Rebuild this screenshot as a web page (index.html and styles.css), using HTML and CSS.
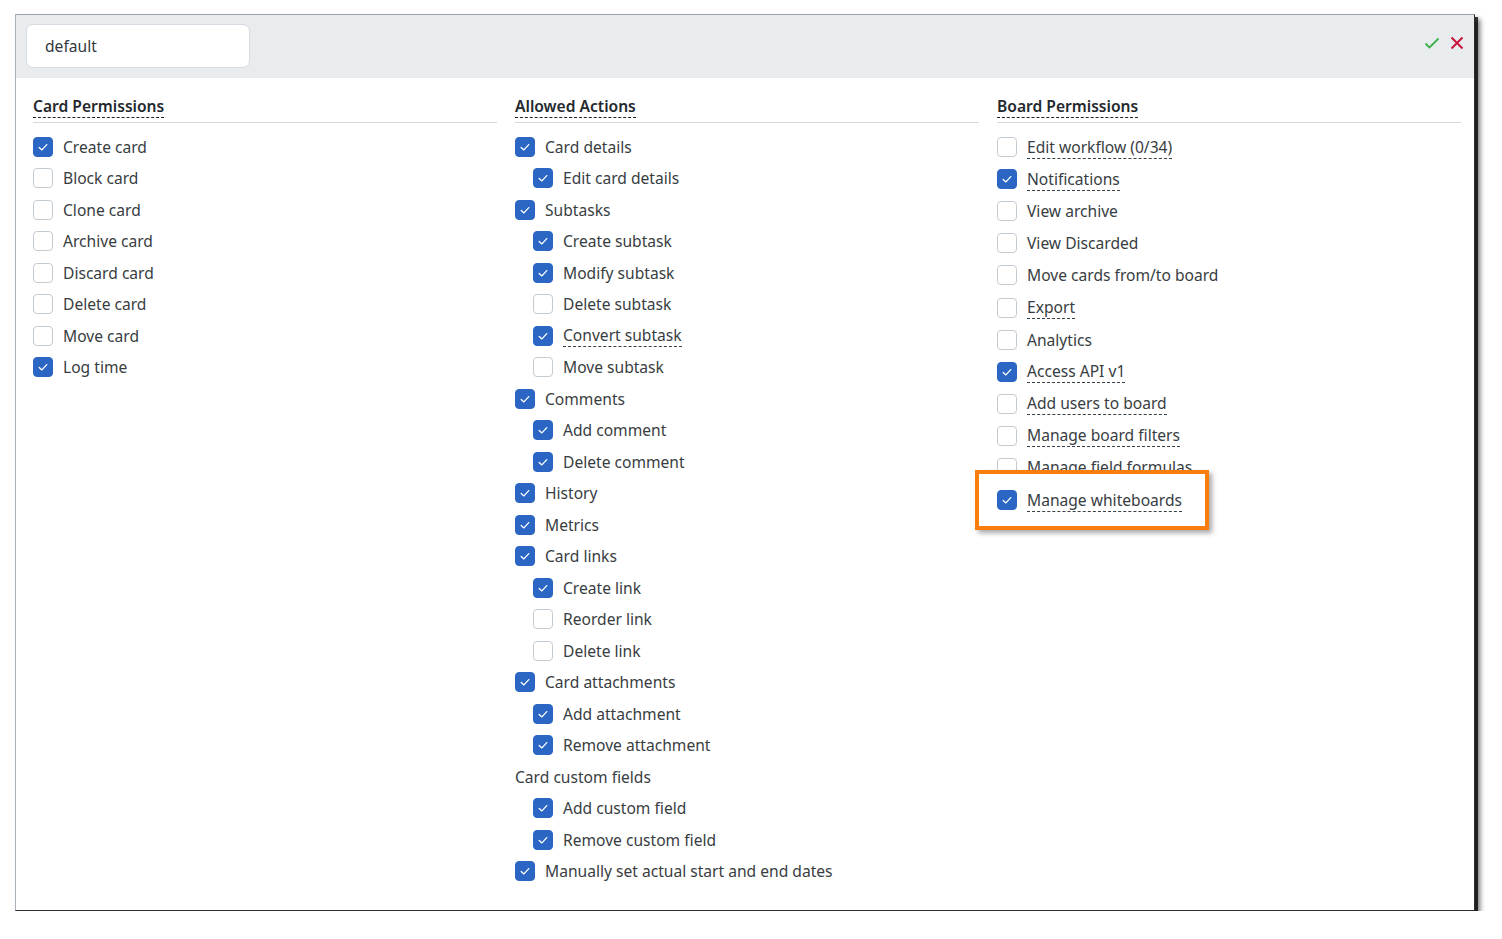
FILE: index.html
```html
<!DOCTYPE html>
<html lang="en">
<head>
<meta charset="utf-8">
<title>Role permissions</title>
<link rel="stylesheet" href="styles.css">
</head>
<body>
<div class="frame">
  <div class="header">
    <div class="name-input">default</div>
    <div class="actions">
      <svg class="icon-ok" width="16" height="12" viewBox="0 0 16 12"><path d="M1.5 6.5 L5.5 10.5 L14.5 1.5" fill="none" stroke="#3db048" stroke-width="1.8"/></svg>
      <svg class="icon-cancel" width="14" height="14" viewBox="0 0 14 14"><path d="M1.5 1.5 L12.5 12.5 M12.5 1.5 L1.5 12.5" fill="none" stroke="#c8163a" stroke-width="2"/></svg>
    </div>
  </div>
  <div class="content">
    <section class="col">
      <h3 class="col-title"><span>Card Permissions</span></h3>
      <ul class="list">
        <li class="item"><span class="cb on"><svg viewBox="0 0 20 20"><path d="M6.2 10.4 L8.9 12.9 L13.8 7.6"/></svg></span><span class="label">Create card</span></li>
        <li class="item"><span class="cb"></span><span class="label">Block card</span></li>
        <li class="item"><span class="cb"></span><span class="label">Clone card</span></li>
        <li class="item"><span class="cb"></span><span class="label">Archive card</span></li>
        <li class="item"><span class="cb"></span><span class="label">Discard card</span></li>
        <li class="item"><span class="cb"></span><span class="label">Delete card</span></li>
        <li class="item"><span class="cb"></span><span class="label">Move card</span></li>
        <li class="item"><span class="cb on"><svg viewBox="0 0 20 20"><path d="M6.2 10.4 L8.9 12.9 L13.8 7.6"/></svg></span><span class="label">Log time</span></li>
      </ul>
    </section>
    <section class="col">
      <h3 class="col-title"><span>Allowed Actions</span></h3>
      <ul class="list">
        <li class="item"><span class="cb on"><svg viewBox="0 0 20 20"><path d="M6.2 10.4 L8.9 12.9 L13.8 7.6"/></svg></span><span class="label">Card details</span></li>
        <li class="item sub"><span class="cb on"><svg viewBox="0 0 20 20"><path d="M6.2 10.4 L8.9 12.9 L13.8 7.6"/></svg></span><span class="label">Edit card details</span></li>
        <li class="item"><span class="cb on"><svg viewBox="0 0 20 20"><path d="M6.2 10.4 L8.9 12.9 L13.8 7.6"/></svg></span><span class="label">Subtasks</span></li>
        <li class="item sub"><span class="cb on"><svg viewBox="0 0 20 20"><path d="M6.2 10.4 L8.9 12.9 L13.8 7.6"/></svg></span><span class="label">Create subtask</span></li>
        <li class="item sub"><span class="cb on"><svg viewBox="0 0 20 20"><path d="M6.2 10.4 L8.9 12.9 L13.8 7.6"/></svg></span><span class="label">Modify subtask</span></li>
        <li class="item sub"><span class="cb"></span><span class="label">Delete subtask</span></li>
        <li class="item sub"><span class="cb on"><svg viewBox="0 0 20 20"><path d="M6.2 10.4 L8.9 12.9 L13.8 7.6"/></svg></span><span class="label dashed">Convert subtask</span></li>
        <li class="item sub"><span class="cb"></span><span class="label">Move subtask</span></li>
        <li class="item"><span class="cb on"><svg viewBox="0 0 20 20"><path d="M6.2 10.4 L8.9 12.9 L13.8 7.6"/></svg></span><span class="label">Comments</span></li>
        <li class="item sub"><span class="cb on"><svg viewBox="0 0 20 20"><path d="M6.2 10.4 L8.9 12.9 L13.8 7.6"/></svg></span><span class="label">Add comment</span></li>
        <li class="item sub"><span class="cb on"><svg viewBox="0 0 20 20"><path d="M6.2 10.4 L8.9 12.9 L13.8 7.6"/></svg></span><span class="label">Delete comment</span></li>
        <li class="item"><span class="cb on"><svg viewBox="0 0 20 20"><path d="M6.2 10.4 L8.9 12.9 L13.8 7.6"/></svg></span><span class="label">History</span></li>
        <li class="item"><span class="cb on"><svg viewBox="0 0 20 20"><path d="M6.2 10.4 L8.9 12.9 L13.8 7.6"/></svg></span><span class="label">Metrics</span></li>
        <li class="item"><span class="cb on"><svg viewBox="0 0 20 20"><path d="M6.2 10.4 L8.9 12.9 L13.8 7.6"/></svg></span><span class="label">Card links</span></li>
        <li class="item sub"><span class="cb on"><svg viewBox="0 0 20 20"><path d="M6.2 10.4 L8.9 12.9 L13.8 7.6"/></svg></span><span class="label">Create link</span></li>
        <li class="item sub"><span class="cb"></span><span class="label">Reorder link</span></li>
        <li class="item sub"><span class="cb"></span><span class="label">Delete link</span></li>
        <li class="item"><span class="cb on"><svg viewBox="0 0 20 20"><path d="M6.2 10.4 L8.9 12.9 L13.8 7.6"/></svg></span><span class="label">Card attachments</span></li>
        <li class="item sub"><span class="cb on"><svg viewBox="0 0 20 20"><path d="M6.2 10.4 L8.9 12.9 L13.8 7.6"/></svg></span><span class="label">Add attachment</span></li>
        <li class="item sub"><span class="cb on"><svg viewBox="0 0 20 20"><path d="M6.2 10.4 L8.9 12.9 L13.8 7.6"/></svg></span><span class="label">Remove attachment</span></li>
        <li class="item"><span class="label plain">Card custom fields</span></li>
        <li class="item sub"><span class="cb on"><svg viewBox="0 0 20 20"><path d="M6.2 10.4 L8.9 12.9 L13.8 7.6"/></svg></span><span class="label">Add custom field</span></li>
        <li class="item sub"><span class="cb on"><svg viewBox="0 0 20 20"><path d="M6.2 10.4 L8.9 12.9 L13.8 7.6"/></svg></span><span class="label">Remove custom field</span></li>
        <li class="item"><span class="cb on"><svg viewBox="0 0 20 20"><path d="M6.2 10.4 L8.9 12.9 L13.8 7.6"/></svg></span><span class="label">Manually set actual start and end dates</span></li>
      </ul>
    </section>
    <section class="col">
      <h3 class="col-title"><span>Board Permissions</span></h3>
      <ul class="list board">
        <li class="item"><span class="cb"></span><span class="label dashed">Edit workflow (0/34)</span></li>
        <li class="item"><span class="cb on"><svg viewBox="0 0 20 20"><path d="M6.2 10.4 L8.9 12.9 L13.8 7.6"/></svg></span><span class="label dashed">Notifications</span></li>
        <li class="item"><span class="cb"></span><span class="label">View archive</span></li>
        <li class="item"><span class="cb"></span><span class="label">View Discarded</span></li>
        <li class="item"><span class="cb"></span><span class="label">Move cards from/to board</span></li>
        <li class="item"><span class="cb"></span><span class="label dashed">Export</span></li>
        <li class="item"><span class="cb"></span><span class="label">Analytics</span></li>
        <li class="item"><span class="cb on"><svg viewBox="0 0 20 20"><path d="M6.2 10.4 L8.9 12.9 L13.8 7.6"/></svg></span><span class="label dashed">Access API v1</span></li>
        <li class="item"><span class="cb"></span><span class="label dashed">Add users to board</span></li>
        <li class="item"><span class="cb"></span><span class="label dashed">Manage board filters</span></li>
        <li class="item"><span class="cb"></span><span class="label dashed">Manage field formulas</span></li>
        <li class="item highlight"><span class="cb on"><svg viewBox="0 0 20 20"><path d="M6.2 10.4 L8.9 12.9 L13.8 7.6"/></svg></span><span class="label dashed">Manage whiteboards</span></li>
      </ul>
    </section>
  </div>
</div>
</body>
</html>
```

FILE: styles.css
```css
* { box-sizing: border-box; }

html, body {
  margin: 0;
  background: #ffffff;
}

body {
  padding: 14px 0 0 15px;
  font-family: "Noto Sans", "Open Sans", "Liberation Sans", sans-serif;
  font-size: 15.6px;
  color: #383d42;
}

.frame {
  width: 1460px;
  height: 897px;
  background: #ffffff;
  border-top: 1px solid #9ea4aa;
  border-left: 1px solid #a9b0b8;
  border-right: 1px solid #2d2d2d;
  border-bottom: 1px solid #2d2d2d;
  box-shadow: 3px 3px 0 rgba(0, 0, 0, 0.75), 5px 5px 5px rgba(0, 0, 0, 0.55);
  display: flex;
  flex-direction: column;
}

.header {
  height: 63px;
  background: #e9ecef;
  display: flex;
  align-items: flex-start;
  justify-content: space-between;
  padding: 9px 10px 0 10px;
}

.name-input {
  width: 224px;
  height: 44px;
  background: #ffffff;
  border: 1px solid #d5dbe0;
  border-radius: 7px;
  padding: 0 18px;
  display: flex;
  align-items: center;
  color: #33383d;
  font-size: 15.6px;
}

.actions {
  display: flex;
  align-items: center;
  gap: 10px;
  height: 36px;
  padding-top: 2px;
}

.actions svg { display: block; }

.content {
  flex: 1;
  display: grid;
  grid-template-columns: repeat(3, 1fr);
  column-gap: 18px;
  padding: 0 13px 0 17px;
  align-items: start;
}

.col-title {
  margin: 0;
  padding: 17px 0 5px 0;
  border-bottom: 1px solid #d3d9de;
  font-size: 15.6px;
  font-weight: 600;
  line-height: 22px;
  color: #24292e;
}

.col-title span {
  border-bottom: 1px dashed #222;
}

.list {
  list-style: none;
  margin: 0;
  padding: 8px 0 0 0;
  display: flex;
  flex-direction: column;
}

.item {
  height: 31.5px;
  display: flex;
  align-items: center;
  gap: 10px;
}

.board .item { height: 32.1px; }

.item.sub { margin-left: 18px; }

.cb {
  flex: none;
  width: 20px;
  height: 20px;
  border: 1px solid #c4ccd3;
  border-radius: 4px;
  background: #ffffff;
  display: flex;
}

.cb.on {
  background: #2b66c4;
  border-color: #2b66c4;
}

.cb svg {
  margin: -1px;
  width: 20px;
  height: 20px;
}

.cb svg path {
  fill: none;
  stroke: #ffffff;
  stroke-width: 1.3;
  stroke-linecap: round;
  stroke-linejoin: round;
}

.label {
  line-height: 22px;
  white-space: nowrap;
}

.label.dashed {
  border-bottom: 1px dashed #3a3f44;
}

.board .item.highlight {
  position: relative;
  z-index: 1;
  align-self: flex-start;
  height: 60px;
  margin: -14px 0 -14px -22px;
  padding: 0 23px 0 18px;
  border: 4px solid #fb7e0b;
  background: #ffffff;
  box-shadow: 3px 3px 5px rgba(0, 0, 0, 0.35);
}
```
